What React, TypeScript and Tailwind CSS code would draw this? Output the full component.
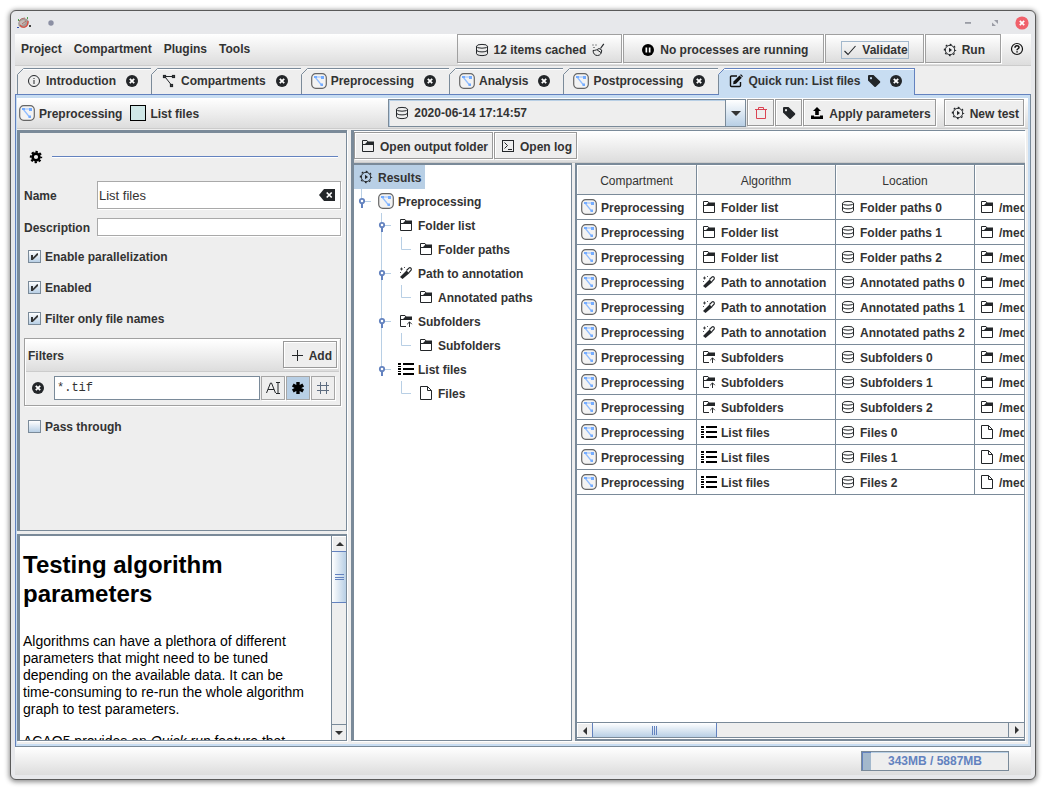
import React, { useState } from "react";

type IconName =
  | "info" | "graph" | "node" | "edit" | "tag" | "close" | "database" | "broom" | "pause"
  | "check" | "run" | "help" | "trash" | "upload" | "gear" | "folder" | "folderUp" | "wand"
  | "list" | "file" | "terminal" | "plus" | "text" | "star" | "hash" | "clear";

const INK = "#232629";

const drawings: Record<IconName, React.ReactNode> = {
  info: (
    <>
      <circle cx="8" cy="8" r="5.5" fill="none" stroke={INK} />
      <path d="M7.5 7h1v4h-1zM7.5 5h1v1h-1z" fill={INK} />
    </>
  ),
  graph: (
    <g fill="none" stroke={INK}>
      <rect x="2.5" y="2.5" width="2" height="2" strokeWidth="1.2" />
      <rect x="11.5" y="2.5" width="2" height="2" strokeWidth="1.2" />
      <rect x="9.5" y="11.5" width="2" height="2" strokeWidth="1.2" />
      <path d="M5 3.500h6.500M4.500 4.500l5.500 7" />
    </g>
  ),
  node: (
    <>
      <rect x="0.7" y="0.7" width="14.6" height="14.6" rx="4" fill="#f3f3f3" stroke="#666666" strokeWidth="1.2" />
      <path d="M4 4h8M4 4l6.500 8" stroke="#8fbcff" fill="none" strokeWidth="1.2" />
      <path d="M3 3h3v2H3zM10 3h3v3h-3zM9.500 10.500h2.500v2.500H9.500z" fill="#74acff" />
    </>
  ),
  edit: (
    <>
      <path d="M9 3H3.500Q2.500 3 2.500 4v8.500q0 1 1 1h8q1 0 1-1V9" fill="none" stroke="#111" strokeWidth="1.4" />
      <path d="M5.500 8.500L11.500 2.500l2.300 2.300L8 10.800l-2.800.5z" fill="#111" />
      <path d="M12 2l1-.8L15 3.200l-.8.9z" fill="#111" />
    </>
  ),
  tag: (
    <path fillRule="evenodd" fill={INK} d="M2 3q0-1 1-1h4.500L14 8.300q.6.700 0 1.400L9.800 13.800q-.7.600-1.400 0L2 7.500zM5 4a1.100 1.100 0 1 0 .01 0z" />
  ),
  close: (
    <>
      <circle cx="8" cy="8" r="6" fill={INK} />
      <path d="M5.800 5.800l4.400 4.400M10.200 5.800l-4.400 4.400" stroke="#fff" strokeWidth="1.800" />
    </>
  ),
  database: (
    <g fill="none" stroke={INK}>
      <ellipse cx="8" cy="4.300" rx="5.500" ry="1.900" />
      <path d="M2.500 4.300v7.400c0 1 2.400 1.900 5.500 1.900s5.500-.9 5.500-1.900V4.300" />
      <path d="M2.500 8c0 1 2.400 1.900 5.500 1.900s5.500-.9 5.500-1.900" />
    </g>
  ),
  broom: (
    <g fill="none" stroke={INK}>
      <path d="M13.800 1.800L10.500 6.500" strokeWidth="1.200" />
      <path d="M3 8.500c.3 3.500 2 5 4.500 5 2.800 0 4.300-2.500 4.200-5.500L9 6.500C7.500 7.500 5.500 8.500 3 8.500zM7 7.800l4.300 3" />
      <path d="M2.500 3h1M5.500 3h1M3.500 5.500h1" />
    </g>
  ),
  pause: (
    <>
      <circle cx="8" cy="8" r="6" fill="#000" />
      <path d="M5.500 5.500h1.700v5H5.500zM8.800 5.500h1.700v5H8.800z" fill="#fff" />
    </>
  ),
  check: <path d="M2.500 9l3.500 3.500L13.500 4" fill="none" stroke={INK} strokeWidth="1.100" />,
  run: (
    <>
      <circle cx="8" cy="8" r="4.700" fill="none" stroke={INK} />
      <circle cx="8" cy="8" r="5.600" fill="none" stroke={INK} strokeWidth="1.200" strokeDasharray="1.800 2.598" strokeDashoffset="0.900" />
      <path d="M7 5.800v4.400L10 8z" fill={INK} />
    </>
  ),
  help: (
    <>
      <circle cx="8" cy="8" r="5.500" fill="none" stroke="#111" strokeWidth="1.200" />
      <path d="M6 6.800c0-2.600 4-2.500 4-.4 0 1.400-2 1.300-2 2.900" fill="none" stroke="#111" strokeWidth="1.500" />
      <path d="M7.300 10.200h1.500v1.300H7.300z" fill="#111" />
    </>
  ),
  trash: (
    <path d="M2 4.500h12M5.500 4.500v-2h5v2M3.500 4.500v9h9v-9" fill="none" stroke="#da4453" />
  ),
  upload: (
    <>
      <path d="M8 2l4 4H9.800v4H6.200V6H4z" fill="#000" />
      <path d="M2 10.500h3v1h6v-1h3V14H2z" fill="#000" />
    </>
  ),
  gear: (
    <>
      <circle cx="8" cy="8" r="3.400" fill="none" stroke="#000" strokeWidth="2.600" />
      <circle cx="8" cy="8" r="5.200" fill="none" stroke="#000" strokeWidth="2" strokeDasharray="2.300 1.784" strokeDashoffset="1.150" />
    </>
  ),
  folder: (
    <>
      <path d="M2.500 2.500h4.500l1 1.500M2.500 2.500v11h11V6" fill="none" stroke={INK} />
      <path d="M2 6h3l2.500-2.500H14V7H2z" fill={INK} />
    </>
  ),
  folderUp: (
    <>
      <path d="M2.500 2.500h4.500l1 1.500M2.500 2.500v11H8" fill="none" stroke={INK} />
      <path d="M2 6h3l2.500-2.500H14V7H2z" fill={INK} />
      <path d="M11.500 14V9M9.200 11.200l2.300-2.300 2.300 2.300" fill="none" stroke={INK} />
    </>
  ),
  wand: (
    <>
      <path d="M2 12L8.500 5.500l2.800 2.800L4.500 14z" fill={INK} />
      <path d="M8.500 5.500l2.600-2.600q1-.6 1.800.3t.2 1.900L10.600 7.800" fill="none" stroke={INK} strokeWidth="1.200" />
      <path d="M3.500 2.500v3M2 4h3M6 2.500h1M2 7.500h1" stroke={INK} strokeWidth="0.800" />
    </>
  ),
  list: (
    <path d="M0 2h3v2H0zM5 2h11v2H5zM0 5h3v1H0zM0 7h3v2H0zM5 7h11v2H5zM0 10h3v1H0zM0 12h3v2H0zM5 12h11v2H5z" fill="#000" />
  ),
  file: (
    <>
      <path d="M2.500 1.500h7l4 4v9h-11z" fill="none" stroke={INK} />
      <path d="M9.500 1.500v4h4" fill="none" stroke={INK} />
    </>
  ),
  terminal: (
    <>
      <rect x="2.500" y="2.500" width="11" height="11" fill="none" stroke={INK} />
      <path d="M4.500 4.500L7.500 7.500l-3 3M8 11.500h4" fill="none" stroke={INK} />
    </>
  ),
  plus: <path d="M8.500 3v11M3 8.500h11" stroke={INK} fill="none" />,
  text: (
    <path d="M1.500 13L5.500 3h1l4 10M3 9.500h6M11 2.500h4M13 2.500v11M11 13.500h4" fill="none" stroke={INK} />
  ),
  star: (
    <path d="M8 2v12M2.800 5l10.400 6M2.800 11l10.400-6" stroke="#000" strokeWidth="3.400" fill="none" />
  ),
  hash: <path d="M5.500 2v12M11.500 2v12M2 5.500h12M2 10.500h12" stroke="#5d6c80" fill="none" />,
  clear: (
    <>
      <path d="M5 2h11v12H5L0 8z" fill={INK} />
      <path d="M7.700 5.500l5 5M12.700 5.500l-5 5" stroke="#fff" strokeWidth="1.700" />
    </>
  ),
};

function Icon({ name }: { name: IconName }) {
  return (
    <svg viewBox="0 0 16 16" className="size-4 shrink-0" aria-hidden="true">
      {drawings[name]}
    </svg>
  );
}

/* Status and action buttons on the menu bar */
function BarButton({ children }: { children: React.ReactNode }) {
  return (
    <button className="mr-px flex h-[29px] items-center gap-1 border border-[#a0a0a0] bg-linear-to-b from-white to-[#dddddd] pt-0.5 pr-[15px] pl-4 shadow-[1px_1px_0_#fff]">
      {children}
    </button>
  );
}

function ToolButton({ icon, label, title }: { icon: IconName; label?: string; title?: string }) {
  return (
    <button
      title={title}
      aria-label={label ?? title}
      className="flex h-[27px] items-center gap-1 border border-[#999999] bg-[#eeeeee] pr-1 pl-[5px] shadow-[inset_1px_1px_0_#fff,1px_1px_0_#fff]"
    >
      <Icon name={icon} />
      {label && <span className="pt-0.5">{label}</span>}
    </button>
  );
}

const tabs: { icon: IconName; label: string; tagged?: boolean }[] = [
  { icon: "info", label: "Introduction" },
  { icon: "graph", label: "Compartments" },
  { icon: "node", label: "Preprocessing" },
  { icon: "node", label: "Analysis" },
  { icon: "node", label: "Postprocessing" },
  { icon: "edit", label: "Quick run: List files", tagged: true },
];

function TabStrip() {
  const active = tabs.length - 1;
  return (
    <div role="tablist" className="flex bg-[#eeeeee] pt-0.5 pl-0.5">
      {tabs.map((tab, i) => {
        const on = i === active;
        return (
          <div
            key={tab.label}
            className={
              "relative flex items-center border-t border-r pb-0.5 shadow-[inset_0_1px_0_#fff] " +
              (i === 0 ? "border-l pl-2 " : "pl-[9px] ") +
              (on
                ? "-mb-px h-[27px] gap-1.5 border-[#6382bf] bg-[#c8ddf2] pr-2.5"
                : "h-[26px] gap-2 border-[#7a8a99] bg-[#eeeeee] pr-[11px]")
            }
          >
            <svg viewBox="0 0 7 7" className="absolute -top-px -left-px size-[7px]" aria-hidden="true">
              <path d="M0 0h7L0 7z" fill="#eeeeee" />
              <path d="M0.500 6.500l6-6" stroke={on ? "#6382bf" : "#7a8a99"} />
            </svg>
            <button role="tab" aria-selected={on} className="flex items-center gap-1">
              <Icon name={tab.icon} />
              {tab.label}
            </button>
            {tab.tagged && <Icon name="tag" />}
            <button aria-label={"Close " + tab.label}>
              <Icon name="close" />
            </button>
          </div>
        );
      })}
    </div>
  );
}

function CheckRow({ label, initial }: { label: string; initial: boolean }) {
  const [on, setOn] = useState(initial);
  return (
    <label className="flex h-4 items-center gap-1 pl-1">
      <span className="grid size-[13px]">
        <input
          type="checkbox"
          checked={on}
          onChange={() => setOn(!on)}
          className="col-start-1 row-start-1 size-[13px] appearance-none border border-[#7a8a99] bg-linear-to-b from-white to-[#b8cfe5]"
        />
        {on && (
          <svg viewBox="0 0 13 13" className="pointer-events-none col-start-1 row-start-1 size-[13px]" aria-hidden="true">
            <path d="M3 5h2v2.500L9 3.300h1V5L4.800 10H3z" fill="#333" />
          </svg>
        )}
      </span>
      <span className="pt-0.5">{label}</span>
    </label>
  );
}

function Settings() {
  const iconBtn =
    "grid size-6 place-items-center border border-[#a6a6a6] shadow-[1px_1px_0_#fff]";
  return (
    <section className="min-h-0 flex-1 overflow-hidden border-t-[3px] border-r border-b border-l-[3px] border-[#7a8a99] bg-[#eeeeee] px-1 pt-4">
      <div className="flex items-center gap-2 pr-1 pl-1">
        <Icon name="gear" />
        <div className="h-0.5 flex-1 border-t border-[#6382bf] bg-white" />
      </div>
      <div className="mt-4 grid grid-cols-[65px_1fr] items-center gap-x-2 gap-y-[9px] pr-px">
        <label htmlFor="name" className="pt-0.5">Name</label>
        <div className="flex h-7 items-center border border-[#a9a9a9] bg-white pr-[5px] pl-px shadow-[1px_1px_0_#fff]">
          <input id="name" defaultValue="List files" className="min-w-0 flex-1 pt-0.5 text-[13px] font-normal outline-none" />
          <button aria-label="Clear name">
            <Icon name="clear" />
          </button>
        </div>
        <label htmlFor="description" className="pt-0.5">Description</label>
        <input id="description" className="h-[18px] w-full min-w-0 border border-[#a9a9a9] bg-white px-px font-normal shadow-[1px_1px_0_#fff] outline-none" />
      </div>
      <div className="mt-3 flex flex-col gap-[15px]">
        <CheckRow label="Enable parallelization" initial={true} />
        <CheckRow label="Enabled" initial={true} />
        <CheckRow label="Filter only file names" initial={true} />
      </div>
      <div className="mt-3 mr-px mb-3 border border-[#a0a0a0] shadow-[inset_1px_1px_0_#fff,1px_1px_0_#fff]">
        <div className="m-px flex h-8 items-start justify-between border-b border-[#cccccc] bg-linear-to-b from-white to-[#dddddd] pt-px pr-0.5 pl-0.5">
          <span className="self-center">Filters</span>
          <ToolButton icon="plus" label="Add" />
        </div>
        <div className="flex items-start gap-px pt-[3px] pr-[5px] pb-[5px] pl-[5px]">
          <button aria-label="Remove filter" className="mt-1 mr-[7px]">
            <Icon name="close" />
          </button>
          <input
            aria-label="Filter pattern"
            defaultValue="*.tif"
            className="h-6 min-w-0 flex-1 border border-[#7a8a99] bg-white px-0.5 font-['Liberation_Mono',monospace] text-xs font-normal outline-none"
          />
          <button aria-label="Plain text" className={iconBtn}><Icon name="text" /></button>
          <button aria-label="Wildcard" className={iconBtn + " bg-[#b8cfe5]"}><Icon name="star" /></button>
          <button aria-label="Regular expression" className={iconBtn}><Icon name="hash" /></button>
        </div>
      </div>
      <CheckRow label="Pass through" initial={false} />
    </section>
  );
}

function Arrow({ d }: { d: string }) {
  return (
    <svg viewBox="0 0 8 8" className="size-2" aria-hidden="true">
      <path d={d} fill="#333" />
    </svg>
  );
}

function HelpPane() {
  return (
    <section className="flex h-[207px] border-t-2 border-r border-b border-l-[3px] border-[#7a8a99] bg-white">
      <div className="min-w-0 flex-1 overflow-hidden pt-3.5 pr-4 pl-[3px] text-[14px] leading-[17px] font-normal text-black">
        <h1 className="mb-[25px] text-2xl leading-[29px] font-bold">Testing algorithm parameters</h1>
        <p className="mb-[15px]">
          Algorithms can have a plethora of different parameters that might need to be tuned depending on the available
          data. It can be time-consuming to re-run the whole algorithm graph to test parameters.
        </p>
        <p>
          ACAQ5 provides an <em>Quick run</em> feature that
        </p>
      </div>
      <div className="flex w-[15px] flex-col border-l border-[#7a8a99] bg-[#eeeeee]">
        <button aria-label="Scroll up" className="grid h-[15px] place-items-center border-t border-l border-white">
          <Arrow d="M4 2l4 4H0z" />
        </button>
        <div className="grid h-[52px] place-items-center border-y border-[#6382bf] bg-linear-to-r from-white to-[#b8cfe5]">
          <div className="h-[6px] w-[9px] border-y border-[#6382bf] py-px">
            <div className="mt-px h-px bg-[#6382bf]" />
          </div>
        </div>
        <div className="flex-1" />
        <button aria-label="Scroll down" className="grid h-4 place-items-center border-t border-[#7a8a99]">
          <Arrow d="M4 6l4-4H0z" />
        </button>
      </div>
    </section>
  );
}

type TreeRow = { depth: 1 | 2 | 3; icon: IconName; label: string; last?: boolean };

const treeRows: TreeRow[] = [
  { depth: 1, icon: "node", label: "Preprocessing", last: true },
  { depth: 2, icon: "folder", label: "Folder list" },
  { depth: 3, icon: "folder", label: "Folder paths" },
  { depth: 2, icon: "wand", label: "Path to annotation" },
  { depth: 3, icon: "folder", label: "Annotated paths" },
  { depth: 2, icon: "folderUp", label: "Subfolders" },
  { depth: 3, icon: "folder", label: "Subfolders" },
  { depth: 2, icon: "list", label: "List files", last: true },
  { depth: 3, icon: "file", label: "Files", last: true },
];

function Connector({ kind }: { kind: "handle" | "handleEnd" | "line" | "elbow" | "blank" }) {
  return (
    <svg viewBox="0 0 20 24" className="h-6 w-5 shrink-0" aria-hidden="true">
      {kind === "line" && <path d="M7.500 0v24" stroke="#b8cfe5" />}
      {kind === "elbow" && <path d="M7.500 0v12.500h9.500" stroke="#b8cfe5" fill="none" />}
      {(kind === "handle" || kind === "handleEnd") && (
        <>
          <path d={kind === "handle" ? "M7.500 0v24M8 12.500h9" : "M7.500 0v12M8 12.500h9"} stroke="#b8cfe5" />
          <path d="M7 14h2v5H7z" fill="#6382bf" />
          <circle cx="8" cy="12" r="2.200" fill="#fff" stroke="#6382bf" strokeWidth="1.800" />
        </>
      )}
    </svg>
  );
}

function ResultTree() {
  return (
    <div className="w-[218px] shrink-0 overflow-hidden border-t-2 border-r border-b border-[#7a8a99] bg-white" role="tree">
      <div role="treeitem" aria-selected="true" className="flex h-6 w-fit items-center gap-1 bg-[#b8cfe5] pr-1 pl-1">
        <Icon name="run" />
        <span className="pt-0.5">Results</span>
      </div>
      {treeRows.map((row, i) => (
        <div key={i} role="treeitem" aria-selected="false" className="flex h-6 items-center gap-1">
          <div className="flex">
            {row.depth > 1 && <Connector kind="blank" />}
            {row.depth > 2 && <Connector kind={row.last ? "blank" : "line"} />}
            <Connector kind={row.depth === 3 ? "elbow" : row.last ? "handleEnd" : "handle"} />
          </div>
          <Icon name={row.icon} />
          <span className="pt-0.5">{row.label}</span>
        </div>
      ))}
    </div>
  );
}

const groups: { icon: IconName; algorithm: string; location: string; data: IconName }[] = [
  { icon: "folder", algorithm: "Folder list", location: "Folder paths", data: "folder" },
  { icon: "wand", algorithm: "Path to annotation", location: "Annotated paths", data: "folder" },
  { icon: "folderUp", algorithm: "Subfolders", location: "Subfolders", data: "folder" },
  { icon: "list", algorithm: "List files", location: "Files", data: "file" },
];

function Cell({ icon, text }: { icon: IconName; text: string }) {
  return (
    <td className="h-[25px] border-r border-b border-[#7a8a99] p-0">
      <div className="flex items-center gap-1 pl-1 whitespace-nowrap">
        <Icon name={icon} />
        <span className="pt-0.5">{text}</span>
      </div>
    </td>
  );
}

function ResultTable() {
  const head = "h-[30px] border-r border-b border-[#7a8a99] bg-[#eeeeee] p-0 pt-0.5 text-center font-normal shadow-[inset_1px_1px_0_#fff]";
  return (
    <div className="flex min-w-0 flex-1 flex-col border-t-2 border-r border-b-2 border-l-2 border-[#7a8a99] bg-white">
      <div className="min-h-0 flex-1 overflow-hidden">
        <table className="w-[1490px] table-fixed border-separate border-spacing-0">
          <colgroup>
            <col className="w-[120px]" />
            <col className="w-[139px]" />
            <col className="w-[139px]" />
            <col />
          </colgroup>
          <thead>
            <tr>
              <th className={head}>Compartment</th>
              <th className={head}>Algorithm</th>
              <th className={head}>Location</th>
              <th className={head} />
            </tr>
          </thead>
          <tbody>
            {groups.map((g) =>
              [0, 1, 2].map((n) => (
                <tr key={g.algorithm + n}>
                  <Cell icon="node" text="Preprocessing" />
                  <Cell icon={g.icon} text={g.algorithm} />
                  <Cell icon="database" text={g.location + " " + n} />
                  <Cell icon={g.data} text="/media" />
                </tr>
              ))
            )}
          </tbody>
        </table>
      </div>
      <div className="mb-px flex h-4 border-y border-[#7a8a99] bg-[#eeeeee]">
        <button aria-label="Scroll left" className="grid w-[15px] place-items-center border-t border-l border-white">
          <Arrow d="M2 4l4-4v8z" />
        </button>
        <div className="flex w-[125px] items-center justify-center border-x border-[#6382bf] bg-linear-to-b from-white to-[#b8cfe5]">
          <div className="flex h-[9px] gap-px">
            <div className="w-px bg-[#6382bf]" />
            <div className="w-px bg-[#6382bf]" />
            <div className="w-px bg-[#6382bf]" />
          </div>
        </div>
        <div className="flex-1" />
        <button aria-label="Scroll right" className="grid w-4 place-items-center border-l border-[#7a8a99]">
          <Arrow d="M6 4L2 0v8z" />
        </button>
      </div>
    </div>
  );
}

function TitleBar() {
  return (
    <div className="flex h-[23px] shrink-0 items-center justify-between pt-px pr-1.5 pl-[5px]">
      <div className="flex items-center gap-4">
        <svg viewBox="0 0 16 16" className="size-4" aria-hidden="true">
          <ellipse cx="7.500" cy="8" rx="5.500" ry="4.600" fill="#a59b98" transform="rotate(-25 7.500 8)" />
          <ellipse cx="6.500" cy="7.500" rx="3" ry="2.200" fill="#c5bcb9" transform="rotate(-25 6.500 7.500)" />
          <path d="M4 10q2 3 5 2t3-6" fill="none" stroke="#e0483c" strokeWidth="1.200" />
          <path d="M3 6q2-3 6-3M6 9l4-3" fill="none" stroke="#b07068" />
          <path d="M1 12h2v1H1z" fill="#3450b0" />
          <path d="M11 2h1v2h-1zM2 4h1v2H2z" fill="#4aa04a" />
          <path d="M13 10h2v2h-2z" fill="#444" />
        </svg>
        <svg viewBox="0 0 6 6" className="size-1.5" aria-hidden="true">
          <circle cx="3" cy="3" r="2.700" fill="#8b8fa3" />
        </svg>
      </div>
      <div className="flex items-center gap-[13px]">
        <button aria-label="Minimize">
          <svg viewBox="0 0 14 14" className="size-3.5"><path d="M4 6h6v1.800H4z" fill="#9a9ca5" /></svg>
        </button>
        <button aria-label="Restore">
          <svg viewBox="0 0 14 14" className="size-3.5">
            <path d="M6 4h4v4zM4 6.500V10h4z" fill="#9a9ca5" />
          </svg>
        </button>
        <button aria-label="Close window">
          <svg viewBox="0 0 14 14" className="size-3.5">
            <circle cx="7" cy="7" r="6.600" fill="#f0616b" />
            <path d="M4.800 4.800l4.400 4.400M9.200 4.800L4.800 9.200" stroke="#fff" strokeWidth="1.700" />
          </svg>
        </button>
      </div>
    </div>
  );
}

export default function App() {
  return (
    <div className="h-screen bg-white p-2.5 font-['Liberation_Sans',Arial,sans-serif] text-xs font-bold text-[#333333]">
      <div className="flex h-full flex-col rounded-md border border-[#5a5a5a] bg-[#e7e8eb] shadow-[0_1px_5px_1px_rgba(0,0,0,0.45)]">
        <TitleBar />
        <div className="mx-1 mb-1 flex min-h-0 flex-1 flex-col bg-[#eeeeee]">
          <nav className="flex h-8 shrink-0 border-b border-[#cccccc] bg-linear-to-b from-white to-[#dddddd]">
            <div className="flex h-[30px] items-center gap-3 pl-1.5">
              <button>Project</button>
              <button>Compartment</button>
              <button>Plugins</button>
              <button>Tools</button>
            </div>
            <div className="ml-auto flex">
              <BarButton>
                <Icon name="database" />
                12 items cached
                <Icon name="broom" />
              </BarButton>
              <BarButton>
                <Icon name="pause" />
                No processes are running
              </BarButton>
              <BarButton>
                <span className="-mx-px flex h-[18px] items-center gap-1 border border-[#a3b8cc]">
                  <Icon name="check" />
                  Validate
                </span>
              </BarButton>
              <BarButton>
                <Icon name="run" />
                Run
              </BarButton>
              <button aria-label="Help" className="grid h-[30px] w-[29px] place-items-center">
                <Icon name="help" />
              </button>
            </div>
          </nav>

          <TabStrip />

          <main className="flex min-h-0 flex-1 flex-col border border-t-[#6382bf] border-r-[#7a8a99] border-b-[#7a8a99] border-l-[#6382bf] bg-[#c8ddf2] pt-[3px] pr-0.5 pb-0.5 pl-px">
            <div className="flex min-h-0 flex-1 flex-col bg-[#eeeeee]">
              <div className="mb-px flex h-[31px] shrink-0 items-start border-b border-[#cccccc] bg-linear-to-b from-white to-[#dddddd] pt-px pr-1 pl-0.5">
                <div className="flex h-7 items-center gap-1">
                  <Icon name="node" />
                  <span className="pt-0.5">Preprocessing</span>
                  <span className="ml-1 size-4 border border-black bg-[#cfe7e7]" />
                  <span className="pt-0.5">List files</span>
                </div>
                <div className="ml-auto flex h-7 w-[358px] items-center border border-[#7a8a99] bg-[#eeeeee] pl-[5px] shadow-[inset_1px_1px_0_#b8cfe5]">
                  <Icon name="database" />
                  <select aria-label="Test run" className="min-w-0 flex-1 appearance-none pl-1 font-bold outline-none">
                    <option>2020-06-14 17:14:57</option>
                  </select>
                  <span className="grid h-full w-5 place-items-center border-l border-[#7a8a99] bg-linear-to-b from-white to-[#b8cfe5]">
                    <svg viewBox="0 0 10 5" className="h-[5px] w-2.5" aria-hidden="true">
                      <path d="M0 0h10L5 5z" fill="#333" />
                    </svg>
                  </span>
                </div>
                <div className="ml-px flex gap-px">
                  <ToolButton icon="trash" title="Delete test" />
                  <ToolButton icon="tag" title="Edit label" />
                  <ToolButton icon="upload" label="Apply parameters" />
                </div>
                <div className="ml-2">
                  <ToolButton icon="run" label="New test" />
                </div>
              </div>

              <div className="flex min-h-0 flex-1 gap-1 pr-[3px] pb-[3px]">
                <div className="flex w-[330px] shrink-0 flex-col gap-[3px] shadow-[1px_1px_0_#fff]">
                  <Settings />
                  <HelpPane />
                </div>
                <div className="flex min-w-0 flex-1 flex-col border-t border-l-[3px] border-[#7a8a99] shadow-[1px_1px_0_#fff]">
                  <div className="flex h-8 shrink-0 items-start gap-px border-b border-[#cccccc] bg-linear-to-b from-white to-[#dddddd] pt-px">
                    <ToolButton icon="folder" label="Open output folder" />
                    <ToolButton icon="terminal" label="Open log" />
                  </div>
                  <div className="flex min-h-0 flex-1 gap-[3px]">
                    <ResultTree />
                    <ResultTable />
                  </div>
                </div>
              </div>
            </div>
          </main>

          <footer className="flex h-7 shrink-0 items-start justify-end bg-linear-to-b from-white to-[#dddddd] pt-1 pr-[22px]">
            <div className="grid h-5 w-[148px] border border-[#7a8a99] bg-[#eeeeee] shadow-[inset_1px_1px_0_#b8cfe5]" role="progressbar" aria-label="Memory" aria-valuenow={343} aria-valuemin={0} aria-valuemax={5887}>
              <div className="col-start-1 row-start-1 w-[6%] border-t border-l border-[#6382bf] bg-[#a3b8cc]" />
              <div className="col-start-1 row-start-1 self-center text-center text-[#6382bf]">343MB / 5887MB</div>
            </div>
          </footer>
        </div>
      </div>
    </div>
  );
}
